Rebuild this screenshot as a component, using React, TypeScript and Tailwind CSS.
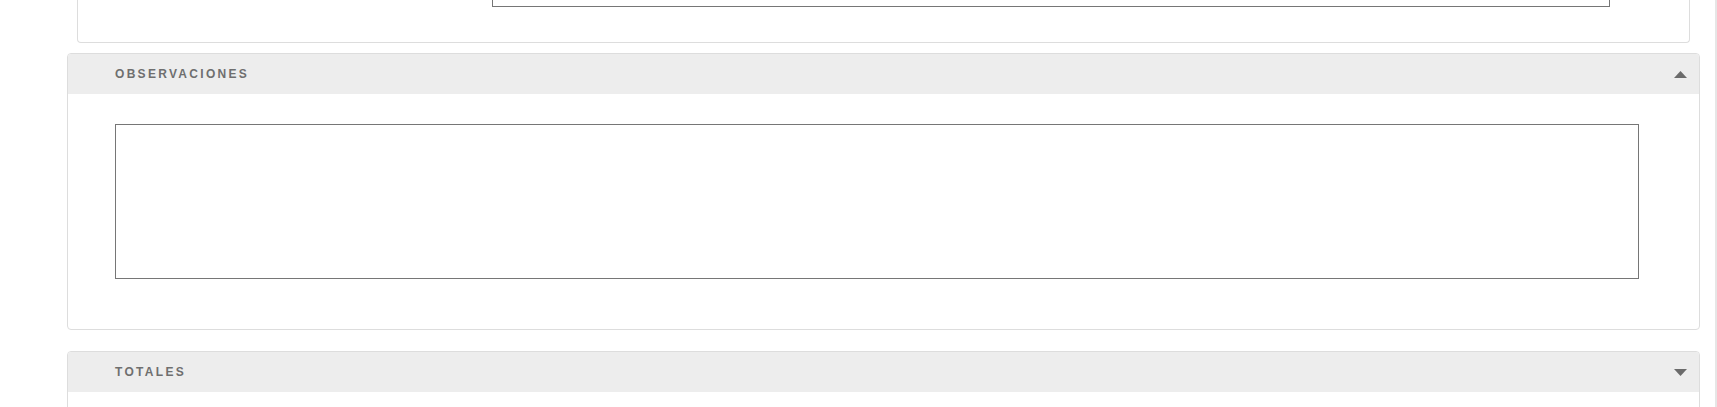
import React from 'react';

const Caret = ({ up }: { up?: boolean }) => (
  <svg width="13" height="7" viewBox="0 0 13 7" className="shrink-0">
    {up ? (
      <polygon points="0,7 6.5,0 13,7" fill="#6b6b6b" />
    ) : (
      <polygon points="0,0 13,0 6.5,7" fill="#6b6b6b" />
    )}
  </svg>
);

const PanelHeader = ({ title, open }: { title: string; open?: boolean }) => (
  <div className="flex h-[40px] items-center justify-between bg-[#ededed] pl-[47px] pr-[12px]">
    <span className="text-[12px] font-bold uppercase tracking-[2.3px] text-[#6f6f6f]">{title}</span>
    <Caret up={open} />
  </div>
);

const App = () => {
  return (
    <div className="flex h-[407px] w-[1717px] overflow-hidden bg-white font-['Liberation_Sans',Arial,sans-serif]">
      <div className="ml-[67px] flex w-[1633px] shrink-0 flex-col">
        {/* --- previous card (cut off at top) --- */}
        <div className="mx-[10px] h-[43px] shrink-0 rounded-b-[4px] border border-t-0 border-[#dddddd]">
          <div className="ml-[414px] h-[7px] w-[1118px] border border-t-0 border-[#767676]" />
        </div>

        {/* --- OBSERVACIONES --- */}
        <div className="mt-[10px] shrink-0 overflow-hidden rounded-[4px] border border-[#dddddd]">
          <PanelHeader title="Observaciones" open />
          <div className="pb-[50px] pl-[47px] pt-[30px]">
            <textarea className="block h-[155px] w-[1524px] resize-none border border-[#767676] outline-none" />
          </div>
        </div>

        {/* --- TOTALES --- */}
        <div className="mt-[21px] h-[120px] shrink-0 overflow-hidden rounded-t-[4px] border border-[#dddddd]">
          <PanelHeader title="Totales" />
        </div>
      </div>
      <div className="ml-auto w-[2px] bg-[#e6e6e6]" />
    </div>
  );
};

export default App;
